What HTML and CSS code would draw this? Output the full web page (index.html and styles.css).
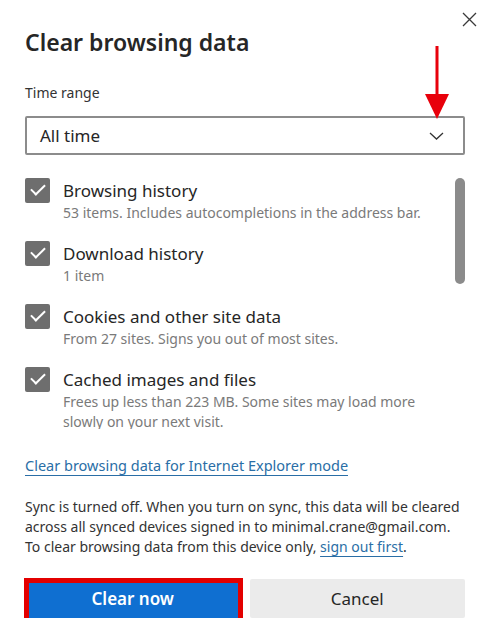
FILE: index.html
```html
<!DOCTYPE html>
<html lang="en">
<head>
    <meta charset="UTF-8">
    <meta name="viewport" content="width=device-width, initial-scale=1.0">
    <title>Clear browsing data</title>
    <link rel="stylesheet" href="styles.css">
</head>
<body>

    <div class="dialog">
        <div class="dialog-header">
            <h1>Clear browsing data</h1>
            <button class="close-btn" title="Close">
                <svg width="15" height="15" viewBox="0 0 15 15">
                    <path d="M1 1 L14 14 M14 1 L1 14" stroke="#3a3a3a" stroke-width="1.3" fill="none"/>
                </svg>
            </button>
        </div>

        <div class="field-label">Time range</div>
        <div class="select-box">
            <span>All time</span>
            <svg class="chevron" width="15" height="8" viewBox="0 0 15 8">
                <path d="M1 1 L7.5 7 L14 1" stroke="#333" stroke-width="1.3" fill="none"/>
            </svg>
        </div>

        <!-- annotation arrow pointing at the dropdown -->
        <svg class="red-arrow" width="26" height="74" viewBox="0 0 26 74">
            <rect x="11.5" y="0" width="3" height="52" fill="#e8000b"/>
            <path d="M1 48 L25 48 L13 73 Z" fill="#e8000b"/>
        </svg>

        <div class="data-list">
            <div class="data-items">
                <div class="data-item">
                    <span class="check"></span>
                    <div class="data-text">
                        <div class="data-title">Browsing history</div>
                        <div class="data-desc">53 items. Includes autocompletions in the address bar.</div>
                    </div>
                </div>
                <div class="data-item">
                    <span class="check"></span>
                    <div class="data-text">
                        <div class="data-title">Download history</div>
                        <div class="data-desc">1 item</div>
                    </div>
                </div>
                <div class="data-item">
                    <span class="check"></span>
                    <div class="data-text">
                        <div class="data-title">Cookies and other site data</div>
                        <div class="data-desc">From 27 sites. Signs you out of most sites.</div>
                    </div>
                </div>
                <div class="data-item">
                    <span class="check"></span>
                    <div class="data-text">
                        <div class="data-title">Cached images and files</div>
                        <div class="data-desc">Frees up less than 223 MB. Some sites may load more slowly on your next visit.</div>
                    </div>
                </div>
            </div>
            <div class="scrollbar"></div>
        </div>

        <a class="ie-link" href="#">Clear browsing data for Internet Explorer mode</a>

        <p class="sync-note">Sync is turned off. When you turn on sync, this data will be cleared across all synced devices signed in to minimal.crane@gmail.com. To clear browsing data from this device only, <a href="#">sign out first</a>.</p>

        <div class="actions">
            <button class="btn btn-primary">Clear now</button>
            <button class="btn btn-secondary">Cancel</button>
        </div>
    </div>

</body>
</html>
```

FILE: styles.css
```css
body {
    margin: 0;
    background-color: #fff;
    font-family: "Segoe UI", "Noto Sans", sans-serif;
    color: #222;
}
.dialog {
    position: relative;
    width: 440px;
    padding: 12px 28px 0 25px;
}
.dialog-header {
    display: flex;
    justify-content: space-between;
    align-items: flex-start;
    margin-right: -12px;
}
.dialog-header h1 {
    margin: 14px 0 0;
    font-size: 23px;
    line-height: 32px;
    font-weight: 600;
    color: #262626;
}
.close-btn {
    background: none;
    border: none;
    padding: 0;
    width: 15px;
    height: 15px;
    cursor: pointer;
}
.close-btn svg {
    display: block;
}
.field-label {
    margin-top: 25px;
    font-size: 14px;
    line-height: 20px;
    color: #333;
}
.select-box {
    display: flex;
    align-items: center;
    justify-content: space-between;
    box-sizing: border-box;
    height: 39px;
    margin-top: 13px;
    padding: 0 19px 0 13px;
    border: 2px solid #8c8c8c;
    border-radius: 2px;
    font-size: 17px;
    color: #262626;
}
.red-arrow {
    position: absolute;
    left: 424px;
    top: 46px;
}
.data-list {
    display: flex;
    justify-content: space-between;
    height: 258px;
    margin-top: 16px;
    overflow: hidden;
}
.data-items {
    padding-top: 7px;
}
.data-item {
    display: flex;
    gap: 13px;
    margin-bottom: 18px;
}
.check {
    flex: none;
    position: relative;
    width: 25px;
    height: 25px;
    border-radius: 2px;
    background-color: #6e6e6e;
}
.check::after {
    content: "";
    position: absolute;
    left: 6px;
    top: 6px;
    width: 12px;
    height: 6px;
    border-left: 2px solid #fff;
    border-bottom: 2px solid #fff;
    transform: rotate(-45deg);
}
.data-title {
    font-size: 17px;
    line-height: 25px;
    color: #262626;
}
.data-desc {
    width: 370px;
    font-size: 14px;
    line-height: 20px;
    color: #7a7a7a;
}
.scrollbar {
    flex: none;
    width: 10px;
    height: 106px;
    margin-top: 7px;
    border-radius: 5px;
    background-color: #8b8b8b;
}
.ie-link {
    display: inline-block;
    margin-top: 26px;
    font-size: 14.5px;
    line-height: 20px;
    color: #2a6ea6;
    text-decoration: none;
    border-bottom: 1px solid #2a6ea6;
}
.sync-note {
    margin: 21px 0 0;
    font-size: 14px;
    line-height: 20px;
    color: #333;
}
.sync-note a {
    color: #2a6ea6;
    text-decoration: underline;
    text-underline-offset: 4px;
}
.actions {
    display: flex;
    gap: 9px;
    margin-top: 22px;
}
.btn {
    flex: 1;
    height: 39px;
    border: none;
    border-radius: 2px;
    font-family: inherit;
    font-size: 17px;
    cursor: pointer;
}
.btn-primary {
    position: relative;
    background-color: #0f6fd1;
    color: #fff;
    font-weight: 600;
}
/* red highlight box drawn over the button */
.btn-primary::after {
    content: "";
    position: absolute;
    left: -1px;
    top: -1px;
    right: -2px;
    bottom: -5px;
    border: 5px solid #e30000;
}
.btn-secondary {
    background-color: #ebebeb;
    color: #262626;
}
```
